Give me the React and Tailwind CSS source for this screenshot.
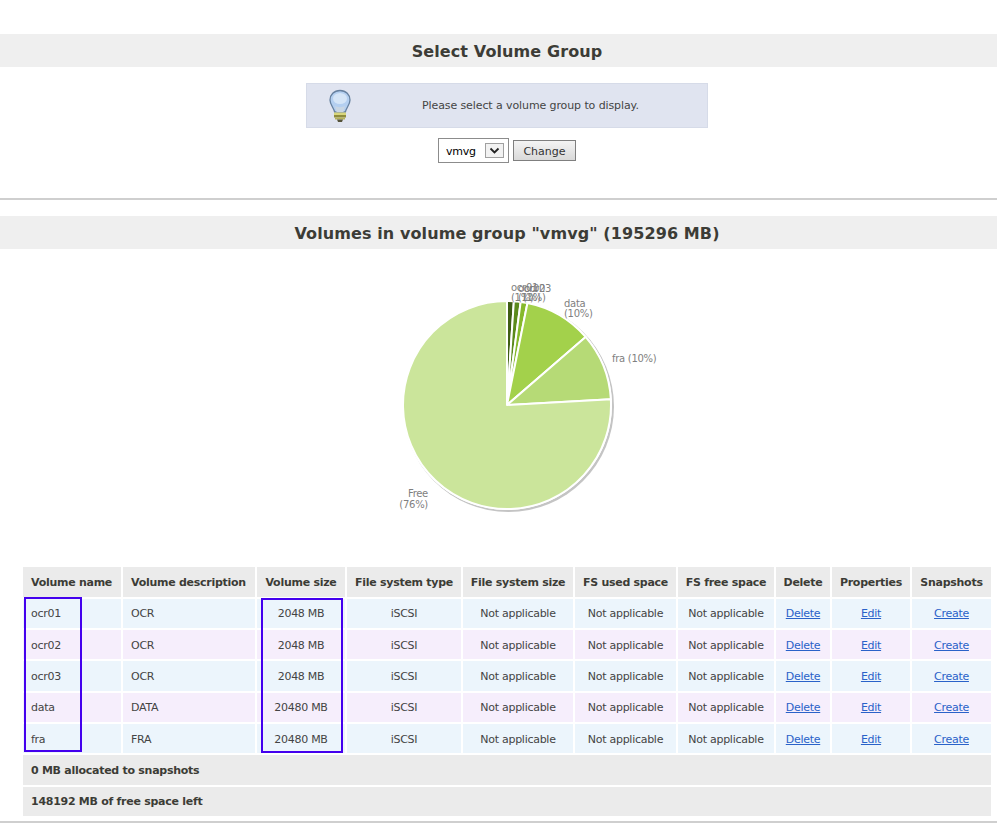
import React from 'react'

const font = { fontFamily: '"DejaVu Sans", sans-serif' }

const columns = [
  { label: 'Volume name', width: 'w-[98px]' },
  { label: 'Volume description', width: 'w-[132px]' },
  { label: 'Volume size', width: 'w-[88px]' },
  { label: 'File system type', width: 'w-[114px]' },
  { label: 'File system size', width: 'w-[110px]' },
  { label: 'FS used space', width: 'w-[101px]' },
  { label: 'FS free space', width: 'w-[96px]' },
  { label: 'Delete', width: 'w-[54px]' },
  { label: 'Properties', width: 'w-[78px]' },
  { label: 'Snapshots', width: 'w-[79px]' },
]

const rows = [
  { name: 'ocr01', desc: 'OCR', size: '2048 MB', h: 'h-[29px]', pt: 'pt-[2px]', bg: 'bg-[#ecf5fc]' },
  { name: 'ocr02', desc: 'OCR', size: '2048 MB', h: 'h-[29px]', pt: 'pt-[4px]', bg: 'bg-[#f6eefc]' },
  { name: 'ocr03', desc: 'OCR', size: '2048 MB', h: 'h-[30px]', pt: 'pt-[2px]', bg: 'bg-[#ecf5fc]' },
  { name: 'data', desc: 'DATA', size: '20480 MB', h: 'h-[29px]', pt: 'pt-[2px]', bg: 'bg-[#f6eefc]' },
  { name: 'fra', desc: 'FRA', size: '20480 MB', h: 'h-[29px]', pt: 'pt-[4px]', bg: 'bg-[#ecf5fc]' },
]

const slices = [
  { pct: 1.05, color: '#3f5f14' },
  { pct: 1.05, color: '#5b8a1c' },
  { pct: 1.05, color: '#86b92c' },
  { pct: 10.49, color: '#a3d14b' },
  { pct: 10.49, color: '#b6da76' },
  { pct: 75.87, color: '#cbe59b' },
]

const CX = 160
const CY = 131
const R = 104

const Pie = () => {
  let acc = 0
  const paths = slices.map(s => {
    const a0 = (acc / 100) * Math.PI * 2
    acc += s.pct
    const a1 = (acc / 100) * Math.PI * 2
    const large = s.pct > 50 ? 1 : 0
    const x0 = CX + R * Math.sin(a0)
    const y0 = CY - R * Math.cos(a0)
    const x1 = CX + R * Math.sin(a1)
    const y1 = CY - R * Math.cos(a1)
    return { d: `M${CX} ${CY}L${x0} ${y0}A${R} ${R} 0 ${large} 1 ${x1} ${y1}Z`, color: s.color }
  })
  return (
    <svg width="320" height="250" viewBox="0 0 320 250" className="block" style={{ fontSize: 10 }} fill="#7f7f7f">
      <circle cx={CX + 1.5} cy={CY + 1.5} r={R + 1.5} fill="#c4c4c4" />
      <circle cx={CX} cy={CY} r={R + 1} fill="#fff" />
      {paths.map(p => (
        <path key={p.color} d={p.d} fill={p.color} stroke="#fff" strokeWidth="2" strokeLinejoin="round" />
      ))}
      <text x="164" y="17">ocr01</text>
      <text x="164" y="27">(1%)</text>
      <text x="171" y="18">ocr02</text>
      <text x="171" y="27">(1%)</text>
      <text x="177" y="18">ocr03</text>
      <text x="176" y="27">(1%)</text>
      <text x="217" y="33">data</text>
      <text x="217" y="43">(10%)</text>
      <text x="265" y="88">fra (10%)</text>
      <text x="81" y="223" textAnchor="end">Free</text>
      <text x="81" y="234" textAnchor="end">(76%)</text>
    </svg>
  )
}

const Bulb = () => (
  <svg width="24" height="34" viewBox="0 0 24 34">
    <path d="M12 1.500C6 1.500 2 5.800 2 11c0 4.800 3.800 7.500 4.600 12h10.800c.8-4.500 4.600-7.200 4.600-12C22 5.800 18 1.500 12 1.500Z" fill="#b4cff0" stroke="#66809f" strokeWidth="1.300" />
    <ellipse cx="12" cy="9.500" rx="7" ry="5.500" fill="#d5e5f7" />
    <path d="M7 17c2 1.500 8 1.500 10 0l-1.500 6h-7Z" fill="#c9d6e4" />
    <rect x="6" y="23.500" width="12" height="2.500" fill="#d8d67c" />
    <rect x="6" y="26" width="12" height="2.500" fill="#8f8c3c" />
    <rect x="7" y="28.500" width="10" height="2" fill="#b5b25a" />
    <path d="M9 30.500h6l-1 2.500h-4Z" fill="#55533a" />
  </svg>
)

const Heading = ({ children }) => (
  <h2 className="h-[33px] bg-[#efefef] pl-[17px] text-center text-[16px] leading-[35px] font-bold tracking-[0.1px] text-[#3c3c36]">{children}</h2>
)

export default function App() {
  return (
    <div className="h-[823px] overflow-hidden bg-white pt-[34px] text-[11px] tracking-[-0.28px] text-[#444]" style={font}>
      <Heading>Select Volume Group</Heading>

      <div className="pl-[17px]">
        <div className="mx-auto mt-4 flex h-[45px] w-[402px] items-center border border-[#d6dbe8] bg-[#e0e4f0] pl-[21px]">
          <Bulb />
          <p className="ml-[70px] pt-[2px] tracking-[-0.1px]">Please select a volume group to display.</p>
        </div>

        <div className="mt-[10px] flex h-[25px] items-center justify-center gap-1">
          <div className="relative h-[25px] w-[71px] border border-[#8c8c8c] bg-white">
            <select className="h-full w-full appearance-none pt-[4px] pl-[7px] text-[11px] text-black outline-none" defaultValue="vmvg">
              <option>vmvg</option>
            </select>
            <span className="pointer-events-none absolute top-[4px] left-[46px] flex h-[15px] w-[19px] items-center justify-center border border-[#a0a0a0] bg-[#f2f2f2]">
              <svg width="11" height="7" viewBox="0 0 11 7"><path d="M1.500 1.500 5.500 5.500 9.500 1.500" fill="none" stroke="#222" strokeWidth="1.800" /></svg>
            </span>
          </div>
          <button className="h-[21px] w-[63px] border border-[#7f7f7f] bg-gradient-to-b from-[#f4f4f4] to-[#d9d9d9] pt-[3px] text-[11px] tracking-normal text-[#333]">Change</button>
        </div>
      </div>

      <hr className="mt-[35px] h-[2px] border-0 bg-[#cfcfcf]" />

      <div className="mt-4">
        <Heading>Volumes in volume group "vmvg" (195296 MB)</Heading>
      </div>

      <div className="mt-[25px] flex h-[291px] justify-center pl-[17px]">
        <Pie />
      </div>

      <div className="relative mx-[21px] w-[972px]">
        <table className="w-[972px] table-fixed border-separate border-spacing-[2px]">
          <thead>
            <tr className="h-[30px]">
              {columns.map(c => (
                <th key={c.label} className={`${c.width} bg-[#ebebeb] p-0 pt-[2px] text-center font-bold tracking-[-0.27px] text-[#3c3c36] first:pl-2 first:text-left [&:nth-child(2)]:pl-2 [&:nth-child(2)]:text-left`}>
                  {c.label}
                </th>
              ))}
            </tr>
          </thead>
          <tbody>
            {rows.map(r => (
              <tr key={r.name} className={r.h}>
                <td className={`${r.bg} ${r.pt} pl-2`}>{r.name}</td>
                <td className={`${r.bg} ${r.pt} pl-2`}>{r.desc}</td>
                <td className={`${r.bg} ${r.pt} text-center`}>{r.size}</td>
                <td className={`${r.bg} ${r.pt} text-center`}>iSCSI</td>
                <td className={`${r.bg} ${r.pt} text-center`}>Not applicable</td>
                <td className={`${r.bg} ${r.pt} text-center`}>Not applicable</td>
                <td className={`${r.bg} ${r.pt} text-center`}>Not applicable</td>
                <td className={`${r.bg} ${r.pt} text-center`}><a href="#" className="text-[#2a62c9] underline">Delete</a></td>
                <td className={`${r.bg} ${r.pt} text-center`}><a href="#" className="text-[#2a62c9] underline">Edit</a></td>
                <td className={`${r.bg} ${r.pt} text-center`}><a href="#" className="text-[#2a62c9] underline">Create</a></td>
              </tr>
            ))}
            <tr className="h-[30px]">
              <td colSpan={10} className="bg-[#ebebeb] pt-[2px] pl-2 font-bold tracking-[-0.27px] text-[#3c3c36]">0 MB allocated to snapshots</td>
            </tr>
            <tr className="h-[29px]">
              <td colSpan={10} className="bg-[#ebebeb] pt-[2px] pl-2 font-bold tracking-[-0.27px] text-[#3c3c36]">148192 MB of free space left</td>
            </tr>
          </tbody>
        </table>
        <div className="absolute top-[32px] left-[3px] h-[155px] w-[58px] border-2 border-[#4400ee]" />
        <div className="absolute top-[33px] left-[240px] h-[155px] w-[82px] border-2 border-[#4400ee]" />
      </div>

      <hr className="mt-[3px] h-[2px] border-0 bg-[#cfcfcf]" />
    </div>
  )
}
